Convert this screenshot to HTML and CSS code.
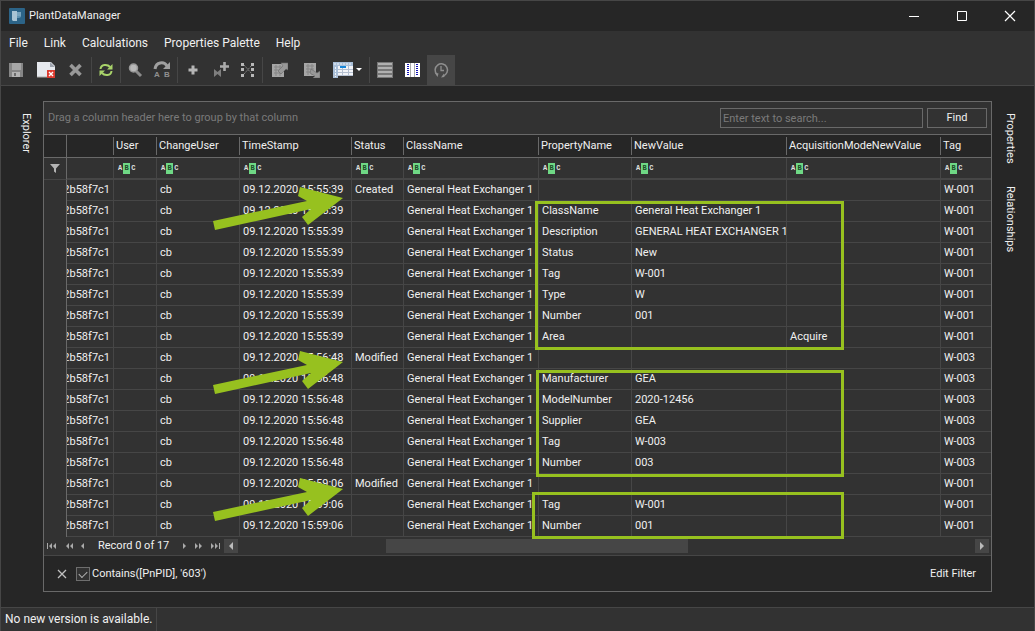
FILE: index.html
```
<!DOCTYPE html>
<html lang="en">
<head>
<meta charset="utf-8">
<title>PlantDataManager</title>
<link rel="stylesheet" href="styles.css">
</head>
<body>
<div class="window">
  <header class="titlebar">
    <svg class="app-icon" width="16" height="16" viewBox="0 0 16 16" aria-hidden="true"><rect width="16" height="16" rx="1" fill="#2c6488"/><path d="M3 3h5v10H4L3 12z" fill="#a9c4d4"/><path d="M8 4h4v5l-2 1H8z" fill="#5f93b2"/><path d="M9 4v4M11 4v4" stroke="#8fb4ca"/></svg>
    <h1 class="title">PlantDataManager</h1>
    <div class="caption-buttons">
      <button type="button" class="caption-button" aria-label="Minimize"><svg width="12" height="12" viewBox="0 0 12 12"><path d="M1 6.5h10" stroke="#fff"/></svg></button>
      <button type="button" class="caption-button" aria-label="Maximize"><svg width="12" height="12" viewBox="0 0 12 12"><path d="M1.5 1.5h9v9h-9z" stroke="#fff" fill="none"/></svg></button>
      <button type="button" class="caption-button" aria-label="Close"><svg width="12" height="12" viewBox="0 0 12 12"><path d="M1 1l10 10M11 1L1 11" stroke="#fff" stroke-width="1.2"/></svg></button>
    </div>
  </header>

  <nav class="menu">
    <button type="button" class="menu-item">File</button>
    <button type="button" class="menu-item">Link</button>
    <button type="button" class="menu-item">Calculations</button>
    <button type="button" class="menu-item">Properties Palette</button>
    <button type="button" class="menu-item">Help</button>
  </nav>

  <div class="toolbar" role="toolbar">
    <button type="button" class="tool" aria-label="Save"><svg width="16" height="16" viewBox="0 0 16 16"><path d="M1 1h14v14H1z" fill="#868686"/><path d="M4 1h9v7H4z" fill="#a6a6a6"/><path d="M4 10h8v5H4z" fill="#b4b4b4"/><path d="M6 11h2v3H6z" fill="#6c6c6c"/></svg></button>
    <button type="button" class="tool tool-wide" aria-label="Discard changes"><svg width="18" height="18" viewBox="0 0 18 18"><path d="M0 1h14l4 4v11H0z" fill="#e6e9ee"/><path d="M13 1l5 5h-5z" fill="#9da3ad"/><path d="M0 16h11" stroke="#aaa"/><path d="M10 9h8v8h-8z" fill="#dc3b30"/><path d="M12 11l4 4M16 11l-4 4" stroke="#fff" stroke-width="1.4"/></svg></button>
    <button type="button" class="tool" aria-label="Delete"><svg width="16" height="16" viewBox="0 0 16 16"><path d="M2.500 3l10 10M12.500 3l-10 10" stroke="#989898" stroke-width="3.600"/></svg></button>
    <span class="tool-sep"></span>
    <button type="button" class="tool tool-narrow" aria-label="Refresh"><svg width="16" height="16" viewBox="0 0 16 16"><path d="M2.500 7c.5-5 7-5 9.500-2M13.500 9c-.5 5-7 5-9.500 2" fill="none" stroke="#a9d36a" stroke-width="2"/><path d="M14.500 2v5.500H9zM1.500 14V8.500H7z" fill="#a9d36a"/></svg></button>
    <span class="tool-sep"></span>
    <button type="button" class="tool tool-narrow" aria-label="Find"><svg width="16" height="16" viewBox="0 0 16 16"><path d="M9 9l5 5" stroke="#8b8b8b" stroke-width="3"/><circle cx="6.500" cy="6" r="4" fill="#b9b9b9" stroke="#989898" stroke-width="1.500"/></svg></button>
    <button type="button" class="tool" aria-label="Replace"><svg width="18" height="18" viewBox="0 0 18 18"><path d="M2 8c1-7 9-8 12-3" fill="none" stroke="#a0a0a0" stroke-width="3"/><path d="M17 1v7h-7z" fill="#a0a0a0"/><text class="tool-letter" x="1" y="16">A</text><text class="tool-letter" x="11" y="16">B</text></svg></button>
    <span class="tool-sep"></span>
    <button type="button" class="tool" aria-label="Add"><svg width="16" height="16" viewBox="0 0 16 16"><path d="M8 3.500v9M3.500 8h9" stroke="#b5b5b5" stroke-width="3"/></svg></button>
    <button type="button" class="tool" aria-label="Add link"><svg width="16" height="16" viewBox="0 0 16 16"><path d="M11.500 0v9M7 4.500h9" stroke="#aaa" stroke-width="2.600"/><path d="M1 7l3.500 3L8 7v8l-3.500-3L1 15z" fill="#7e7e7e"/></svg></button>
    <button type="button" class="tool tool-narrow" aria-label="Map"><svg width="14" height="16" viewBox="0 0 14 16"><path d="M3 3l8 9M3 12l8-9" stroke="#858585" stroke-dasharray="2 1"/><path d="M0 1h3v3H0zM0 6h3v3H0zM0 12h3v3H0zM10 1h3v3h-3zM10 6h3v3h-3zM10 12h3v3h-3z" fill="#b8b8b8"/></svg></button>
    <span class="tool-sep"></span>
    <button type="button" class="tool tool-wide" aria-label="Export"><svg width="16" height="16" viewBox="0 0 16 16"><path d="M0 2h12v13H0z" fill="#a6a6a6"/><path d="M2 5h8M2 8h8M2 11h8M4 3v11M8 3v11" stroke="#858585"/><path d="M6 9l5-5-2-3h7v7l-2-1-5 5z" fill="#989898" stroke="#6b6b6b" stroke-width=".6"/></svg></button>
    <button type="button" class="tool tool-wide" aria-label="Import"><svg width="16" height="16" viewBox="0 0 16 16"><path d="M0 1h12v13H0z" fill="#a6a6a6"/><path d="M2 4h8M2 7h8M2 10h8M4 2v11M8 2v11" stroke="#858585"/><path d="M7 7l6 4 3-2v7H9l2-2-5-3z" fill="#989898" stroke="#6b6b6b" stroke-width=".6"/></svg></button>
    <button type="button" class="tool tool-drop" aria-label="Layouts"><svg width="30" height="16" viewBox="0 0 30 16"><path d="M0 0h20v14H0z" fill="#f2f4f8"/><path d="M0 0h20v4H0zM0 4h5v12H0z" fill="#a9bfd8"/><path d="M1 2h18M2.500 5v10" stroke="#eef4fa" stroke-dasharray="2 1"/><path d="M5 7.500h15M5 10.500h15M9.500 4v10M15.500 4v10M0 13.500h20" stroke="#b4bfd0"/><path d="M7 5h6" stroke="#1686d9" stroke-width="2"/><path d="M23 6h6l-3 3z" fill="#fff"/></svg></button>
    <span class="tool-sep"></span>
    <button type="button" class="tool" aria-label="Rows"><svg width="16" height="16" viewBox="0 0 16 16"><path d="M0 0h16v16H0z" fill="#777"/><path d="M1 2h14M1 6h14M1 10h14M1 14h14" stroke="#b0b0b0" stroke-width="2"/></svg></button>
    <button type="button" class="tool" aria-label="Columns"><svg width="16" height="16" viewBox="0 0 16 16"><path d="M0 1h15v14H0z" fill="#fff"/><path d="M5.500 1v14M9.500 1v14" stroke="#aaa"/><path d="M3 2v12M12 2v12" stroke="#1414b4" stroke-width="2" stroke-dasharray="1 1"/></svg></button>
    <button type="button" class="tool tool-active" aria-label="History" aria-pressed="true"><svg width="16" height="16" viewBox="0 0 16 16"><path d="M4 12.500A6.200 6.200 0 1 1 10 14" fill="none" stroke="#8f8f8f" stroke-width="1.500"/><path d="M1.500 10.500l4 1-1 3.500zM8 15.500l3-4 .5 3.500z" fill="#8f8f8f"/><path d="M8 4v4.500h3" stroke="#8f8f8f" fill="none" stroke-width="1.300"/></svg></button>
  </div>

  <main class="main">
    <aside class="side"><button type="button" class="side-tab">Explorer</button></aside>

    <section class="grid">
      <div class="group-panel">
        <span class="group-hint">Drag a column header here to group by that column</span>
        <input class="search" type="text" placeholder="Enter text to search..." aria-label="Search">
        <button type="button" class="find">Find</button>
      </div>

      <table class="data">
        <colgroup><col class="c-ind"><col class="c-id"><col class="c-user"><col class="c-change"><col class="c-time"><col class="c-status"><col class="c-class"><col class="c-prop"><col class="c-value"><col class="c-mode"><col></colgroup>
        <thead>
          <tr class="head-row"><th></th><th></th><th><span>User</span></th><th><span>ChangeUser</span></th><th><span>TimeStamp</span></th><th><span>Status</span></th><th><span>ClassName</span></th><th><span>PropertyName</span></th><th><span>NewValue</span></th><th><span>AcquisitionModeNewValue</span></th><th><span>Tag</span></th></tr>
          <tr class="filter-row"><td><svg class="funnel" width="10" height="9" viewBox="0 0 10 9"><path d="M0 0h10L6 4.500V9L4 7.500v-3z" fill="#b4b4b4"/></svg></td><td></td>
            <td><span class="abc">A<b>B</b>C</span></td><td><span class="abc">A<b>B</b>C</span></td><td><span class="abc">A<b>B</b>C</span></td><td><span class="abc">A<b>B</b>C</span></td><td><span class="abc">A<b>B</b>C</span></td><td><span class="abc">A<b>B</b>C</span></td><td><span class="abc">A<b>B</b>C</span></td><td><span class="abc">A<b>B</b>C</span></td><td><span class="abc">A<b>B</b>C</span></td></tr>
        </thead>
        <tbody>
          <tr><td></td><td><div class="tail">2b58f7c1</div></td><td></td><td>cb</td><td>09.12.2020 15:55:39</td><td>Created</td><td>General Heat Exchanger 1</td><td></td><td></td><td></td><td>W-001</td></tr>
          <tr><td></td><td><div class="tail">2b58f7c1</div></td><td></td><td>cb</td><td>09.12.2020 15:55:39</td><td></td><td>General Heat Exchanger 1</td><td>ClassName</td><td>General Heat Exchanger 1</td><td></td><td>W-001</td></tr>
          <tr><td></td><td><div class="tail">2b58f7c1</div></td><td></td><td>cb</td><td>09.12.2020 15:55:39</td><td></td><td>General Heat Exchanger 1</td><td>Description</td><td>GENERAL HEAT EXCHANGER 1</td><td></td><td>W-001</td></tr>
          <tr><td></td><td><div class="tail">2b58f7c1</div></td><td></td><td>cb</td><td>09.12.2020 15:55:39</td><td></td><td>General Heat Exchanger 1</td><td>Status</td><td>New</td><td></td><td>W-001</td></tr>
          <tr><td></td><td><div class="tail">2b58f7c1</div></td><td></td><td>cb</td><td>09.12.2020 15:55:39</td><td></td><td>General Heat Exchanger 1</td><td>Tag</td><td>W-001</td><td></td><td>W-001</td></tr>
          <tr><td></td><td><div class="tail">2b58f7c1</div></td><td></td><td>cb</td><td>09.12.2020 15:55:39</td><td></td><td>General Heat Exchanger 1</td><td>Type</td><td>W</td><td></td><td>W-001</td></tr>
          <tr><td></td><td><div class="tail">2b58f7c1</div></td><td></td><td>cb</td><td>09.12.2020 15:55:39</td><td></td><td>General Heat Exchanger 1</td><td>Number</td><td>001</td><td></td><td>W-001</td></tr>
          <tr><td></td><td><div class="tail">2b58f7c1</div></td><td></td><td>cb</td><td>09.12.2020 15:55:39</td><td></td><td>General Heat Exchanger 1</td><td>Area</td><td></td><td>Acquire</td><td>W-001</td></tr>
          <tr><td></td><td><div class="tail">2b58f7c1</div></td><td></td><td>cb</td><td>09.12.2020 15:56:48</td><td>Modified</td><td>General Heat Exchanger 1</td><td></td><td></td><td></td><td>W-003</td></tr>
          <tr><td></td><td><div class="tail">2b58f7c1</div></td><td></td><td>cb</td><td>09.12.2020 15:56:48</td><td></td><td>General Heat Exchanger 1</td><td>Manufacturer</td><td>GEA</td><td></td><td>W-003</td></tr>
          <tr><td></td><td><div class="tail">2b58f7c1</div></td><td></td><td>cb</td><td>09.12.2020 15:56:48</td><td></td><td>General Heat Exchanger 1</td><td>ModelNumber</td><td>2020-12456</td><td></td><td>W-003</td></tr>
          <tr><td></td><td><div class="tail">2b58f7c1</div></td><td></td><td>cb</td><td>09.12.2020 15:56:48</td><td></td><td>General Heat Exchanger 1</td><td>Supplier</td><td>GEA</td><td></td><td>W-003</td></tr>
          <tr><td></td><td><div class="tail">2b58f7c1</div></td><td></td><td>cb</td><td>09.12.2020 15:56:48</td><td></td><td>General Heat Exchanger 1</td><td>Tag</td><td>W-003</td><td></td><td>W-003</td></tr>
          <tr><td></td><td><div class="tail">2b58f7c1</div></td><td></td><td>cb</td><td>09.12.2020 15:56:48</td><td></td><td>General Heat Exchanger 1</td><td>Number</td><td>003</td><td></td><td>W-003</td></tr>
          <tr><td></td><td><div class="tail">2b58f7c1</div></td><td></td><td>cb</td><td>09.12.2020 15:59:06</td><td>Modified</td><td>General Heat Exchanger 1</td><td></td><td></td><td></td><td>W-001</td></tr>
          <tr><td></td><td><div class="tail">2b58f7c1</div></td><td></td><td>cb</td><td>09.12.2020 15:59:06</td><td></td><td>General Heat Exchanger 1</td><td>Tag</td><td>W-001</td><td></td><td>W-001</td></tr>
          <tr><td></td><td><div class="tail">2b58f7c1</div></td><td></td><td>cb</td><td>09.12.2020 15:59:06</td><td></td><td>General Heat Exchanger 1</td><td>Number</td><td>001</td><td></td><td>W-001</td></tr>
        </tbody>
      </table>

      <div class="navigator">
        <button type="button" class="nav" aria-label="First"><svg width="10" height="6" viewBox="0 0 10 6"><path d="M0 0h1v6H0zM5 0v6L2 3zM9 0v6L6 3z" fill="#aaa"/></svg></button>
        <button type="button" class="nav" aria-label="Previous page"><svg width="8" height="6" viewBox="0 0 8 6"><path d="M4 0v6L1 3zM8 0v6L5 3z" fill="#aaa"/></svg></button>
        <button type="button" class="nav" aria-label="Previous"><svg width="4" height="6" viewBox="0 0 4 6"><path d="M3 0v6L0 3z" fill="#aaa"/></svg></button>
        <span class="record">Record 0 of 17</span>
        <button type="button" class="nav" aria-label="Next"><svg width="4" height="6" viewBox="0 0 4 6"><path d="M1 0v6l3-3z" fill="#aaa"/></svg></button>
        <button type="button" class="nav" aria-label="Next page"><svg width="8" height="6" viewBox="0 0 8 6"><path d="M1 0v6l3-3zM5 0v6l3-3z" fill="#aaa"/></svg></button>
        <button type="button" class="nav" aria-label="Last"><svg width="10" height="6" viewBox="0 0 10 6"><path d="M1 0v6l3-3zM5 0v6l3-3zM9 0h1v6H9z" fill="#aaa"/></svg></button>
        <div class="scrollbar">
          <button type="button" class="scroll-button" aria-label="Scroll left"><svg width="4" height="8" viewBox="0 0 4 8"><path d="M4 0v8L0 4z" fill="#bbb"/></svg></button>
          <div class="track"><div class="thumb"></div></div>
          <button type="button" class="scroll-button" aria-label="Scroll right"><svg width="4" height="8" viewBox="0 0 4 8"><path d="M0 0v8l4-4z" fill="#bbb"/></svg></button>
        </div>
      </div>

      <div class="filter-panel">
        <button type="button" class="clear" aria-label="Clear filter"><svg width="10" height="10" viewBox="0 0 10 10"><path d="M1 1l8 8M9 1L1 9" stroke="#c0c0c0" stroke-width="1.300"/></svg></button>
        <input type="checkbox" class="check" id="filter-on" checked>
        <label for="filter-on">Contains([PnPID], '603')</label>
        <button type="button" class="edit-filter">Edit Filter</button>
      </div>

      <div class="mark mark-created"></div>
      <div class="mark mark-modified"></div>
      <div class="mark mark-renumbered"></div>
      <svg class="arrow arrow-created" width="131" height="46" viewBox="0 0 131 46"><path d="M0 35l94-20-9-5 2-9 43 11-35 27-6-8 9-8L2 44z" fill="#97c11f"/></svg>
      <svg class="arrow arrow-modified" width="131" height="46" viewBox="0 0 131 46"><path d="M0 35l94-20-9-5 2-9 43 11-35 27-6-8 9-8L2 44z" fill="#97c11f"/></svg>
      <svg class="arrow arrow-renumbered" width="131" height="46" viewBox="0 0 131 46"><path d="M0 35l94-20-9-5 2-9 43 11-35 27-6-8 9-8L2 44z" fill="#97c11f"/></svg>
    </section>

    <aside class="side side-right"><button type="button" class="side-tab">Properties</button><button type="button" class="side-tab">Relationships</button></aside>
  </main>

  <footer class="status"><span class="status-text">No new version is available.</span></footer>
</div>
</body>
</html>
```
FILE: styles.css
```
* { box-sizing: border-box; }

body {
  margin: 0;
  background: #262626;
  color: #f0f0f0;
  font: 11px/14px Roboto, "Noto Sans", sans-serif;
}

button {
  margin: 0;
  padding: 0;
  border: 0;
  background: none;
  color: inherit;
  font: inherit;
}

svg { display: block; }

.window {
  display: flex;
  flex-direction: column;
  min-height: 100vh;
  border: 1px solid #464646;
}

.titlebar {
  display: flex;
  align-items: center;
  gap: 4px;
  height: 30px;
  padding-left: 8px;
}
.title { margin: 0; flex: 1; font-size: 11px; font-weight: 400; }
.caption-buttons { display: flex; }
.caption-button {
  display: grid;
  place-items: center;
  width: 48px;
  height: 30px;
}

.menu {
  display: flex;
  align-items: center;
  height: 24px;
  background: #323232;
}
.menu-item { padding: 0 8px; font-size: 12px; line-height: 16px; }

.toolbar {
  display: flex;
  height: 31px;
  padding-left: 1px;
  background: #323232;
  border-bottom: 1px solid #464646;
}
.tool { display: grid; place-items: center; width: 28px; }
.tool-narrow { width: 26px; }
.tool-wide { width: 32px; }
.tool-drop { width: 40px; }
.tool-active { background: #464646; }
.tool-letter { fill: #909090; font: bold 8px "Liberation Sans", sans-serif; }
.tool-sep { width: 1px; margin: 2px 1px; background: #464646; }

.main { display: flex; flex: 1; padding: 15px 0; }
.side {
  display: flex;
  flex-direction: column;
  align-items: center;
  gap: 22px;
  width: 42px;
  padding: 12px 0 0 8px;
}
.side-right { padding: 12px 6px 0 0; }
.side-tab { writing-mode: vertical-rl; }

.grid {
  position: relative;
  display: flex;
  flex: 1;
  flex-direction: column;
  min-width: 0;
  border: 1px solid #696969;
  background: #323232;
}

.group-panel {
  display: flex;
  align-items: center;
  gap: 4px;
  height: 32px;
  padding: 0 4px;
}
.group-hint { flex: 1; color: #7a7a7a; }
.search, .find {
  height: 20px;
  border: 1px solid #696969;
}
.search {
  width: 203px;
  padding: 0 2px;
  background: #323232;
  color: inherit;
  font: inherit;
}
.search::placeholder { color: #7a7a7a; }
.find { width: 60px; }

.data {
  width: 100%;
  table-layout: fixed;
  border-collapse: separate;
  border-spacing: 0;
}
.c-ind { width: 23px; }
.c-id { width: 46px; }
.c-user { width: 43px; }
.c-change { width: 83px; }
.c-time { width: 112px; }
.c-status { width: 52px; }
.c-class { width: 135px; }
.c-prop { width: 93px; }
.c-value { width: 155px; }
.c-mode { width: 154px; }

.data th, .data td {
  overflow: hidden;
  padding: 0 0 0 4px;
  font-weight: 400;
  text-align: left;
  white-space: nowrap;
}
.data th {
  height: 24px;
  padding: 0;
  background: #262626;
  border-top: 1px solid #696969;
  border-bottom: 1px solid #696969;
}
.data th span {
  display: block;
  padding-left: 2px;
  border-left: 1px solid #696969;
  line-height: 18px;
}
.data td {
  height: 21px;
  padding-left: 3px;
  border-bottom: 1px solid #464646;
  border-left: 1px solid #464646;
}
.data td:nth-child(-n+2) { border-left: 0; }
.data td:first-child { border-bottom: 0; }
.data tr > :first-child { border-right: 1px solid #696969; }
.filter-row td, .filter-row td:first-child {
  height: 22px;
  border-bottom: 2px solid #464646;
}
.filter-row td:first-child { border-bottom-width: 1px; }
.funnel { margin-left: 3px; }
.data td:nth-child(2) { padding: 0; }
.tail {
  display: flex;
  justify-content: flex-end;
  padding-right: 3px;
}

.abc {
  display: flex;
  align-items: center;
  gap: 1px;
  padding-left: 1px;
  color: #e0e0e0;
  font: bold 7px/11px "Liberation Mono", monospace;
}
.abc b {
  width: 7px;
  background: #6fd885;
  color: #1d4a28;
  text-align: center;
}

.navigator {
  display: flex;
  align-items: center;
  gap: 8px;
  height: 19px;
  padding: 0 2px 0 3px;
  border-bottom: 1px solid #464646;
}
.nav { display: grid; place-items: center; }
.record { padding: 0 5px; }
.scrollbar { display: flex; flex: 1; height: 14px; margin-left: -4px; }
.scroll-button {
  display: grid;
  place-items: center;
  width: 14px;
  background: #464646;
}
.track { display: flex; flex: 1; }
.thumb { width: 41%; margin-left: 20%; background: #464646; }

.filter-panel {
  display: flex;
  flex: 1;
  align-items: center;
  gap: 2px;
  min-height: 35px;
  padding: 0 15px 0 13px;
  background: #262626;
}
.clear { margin-right: 7px; }
.check {
  appearance: none;
  width: 14px;
  height: 14px;
  margin: 0;
  border: 1px solid #6e6e6e;
  background: #323232;
  display: grid;
  place-items: center;
}
.check:checked::before {
  content: "";
  width: 7px;
  height: 4px;
  border: solid #b4b4b4;
  border-width: 0 0 1px 1px;
  transform: rotate(-45deg);
}
.edit-filter { margin-left: auto; }

/* Annotations drawn over the table */
.mark { position: absolute; border: 3px solid #97c11f; }
.mark-created { left: 491px; top: 99px; width: 309px; height: 149px; }
.mark-modified { left: 492px; top: 268px; width: 308px; height: 107px; }
.mark-renumbered { left: 488px; top: 390px; width: 312px; height: 47px; }
.arrow { position: absolute; left: 169px; }
.arrow-created { top: 84px; }
.arrow-modified { top: 248px; }
.arrow-renumbered { top: 375px; }

.status {
  display: flex;
  height: 24px;
  border-top: 1px solid #464646;
  background: #323232;
}
.status-text {
  padding: 0 4px;
  border-right: 1px solid #464646;
  font-size: 12px;
  line-height: 22px;
}
```
